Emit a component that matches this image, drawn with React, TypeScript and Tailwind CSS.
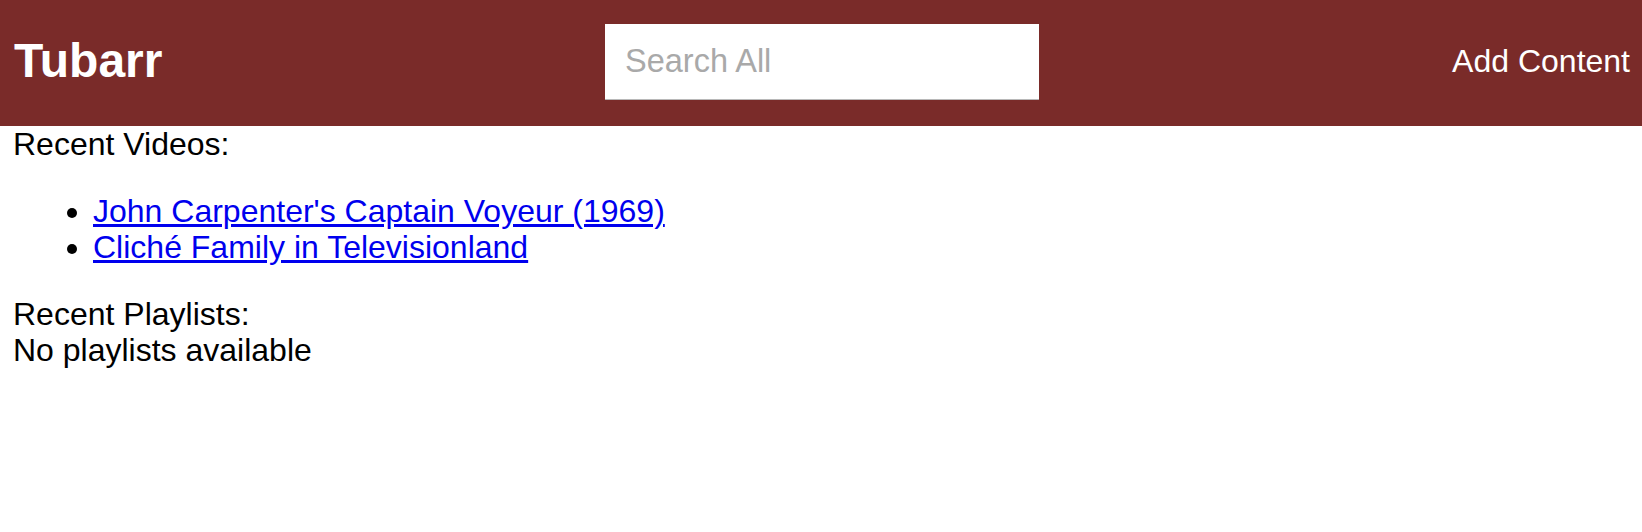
import React from "react";

export default function App() {
  return (
    <div className="min-h-screen bg-white text-black" style={{ fontFamily: '"Liberation Sans", Arial, Helvetica, sans-serif' }}>
      <header className="h-[126px] bg-[#7a2b29] flex items-center pl-[14px] pr-[12px] pb-[2px]">
        <div className="flex-1 flex items-center">
          <h1 className="text-[48px] leading-none font-bold text-white m-0 mb-[2px]">Tubarr</h1>
        </div>
        <div className="flex items-center">
          <input
            type="text"
            placeholder="Search All"
            className="box-border w-[434px] h-[76px] bg-white border-b border-[#b8b8b8] pl-[20px] text-[32.5px] text-black placeholder:text-[#a9a9a9] outline-none"
          />
        </div>
        <div className="flex-1 flex items-center justify-end">
          <span className="text-[32px] leading-none text-white mb-[3px]">Add Content</span>
        </div>
      </header>
      <main className="px-[13px] text-[32px] leading-[36px]">
        <div>Recent Videos:</div>
        <ul className="list-disc pl-[80px] my-[31px]">
          <li>
            <a href="#" className="text-[#0000ee] underline">John Carpenter's Captain Voyeur (1969)</a>
          </li>
          <li>
            <a href="#" className="text-[#0000ee] underline">Cliché Family in Televisionland</a>
          </li>
        </ul>
        <div>Recent Playlists:</div>
        <div>No playlists available</div>
      </main>
    </div>
  );
}
